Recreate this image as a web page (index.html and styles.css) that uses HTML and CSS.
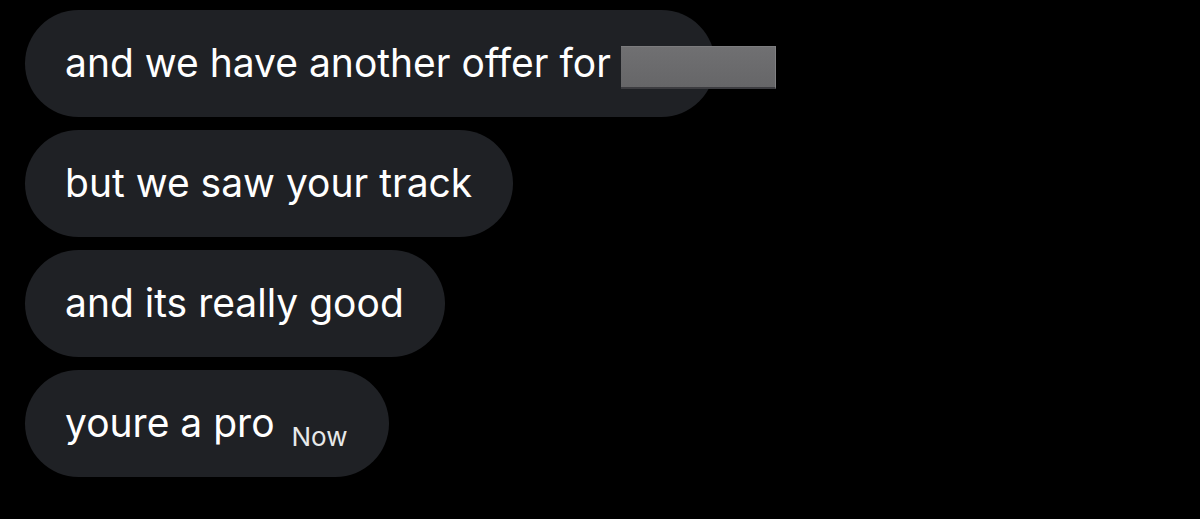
FILE: index.html
```html
<html>

<head>
  <link rel="stylesheet" href="styles.css">
</head>

<body>
  <div class="thread">
    <!-- first bubble has a redacted name at the end -->
    <div class="bubble first">
      <span class="msg">and we have another offer for</span>
      <span class="redact"></span>
    </div>
    <div class="bubble">
      <span class="msg">but we saw your track</span>
    </div>
    <div class="bubble">
      <span class="msg">and its really good</span>
    </div>
    <div class="bubble">
      <span class="msg">youre a pro</span>
      <span class="time">Now</span>
    </div>
  </div>
</body>

</html>
```

FILE: styles.css
```css
body {
  margin: 0;
  background-color: #000;
  font-family: Inter, "Open Sans", sans-serif;
  color: #fff;
}

.thread {
  display: flex;
  flex-direction: column;
  align-items: flex-start;
  gap: 13px;
  padding: 10px 0 0 25px;
}

.bubble {
  position: relative;
  display: flex;
  align-items: center;
  height: 107px;
  padding: 0 41px 0 40px;
  border-radius: 54px;
  background-color: #1f2125;
  box-sizing: border-box;
}

.bubble.first {
  padding-right: 104px; /* room for the hidden name */
}

.msg {
  font-size: 39px;
  margin-top: -2px;
}

.time {
  font-size: 26px;
  margin-left: 17px;
  margin-top: 26px;
  color: #e7e9ea;
}

.redact {
  position: absolute;
  left: 596px;
  top: 36px;
  width: 155px;
  height: 43px;
  background: linear-gradient(#707072, #666668);
  border-top: 1px solid #7c7c7e;
  border-bottom: 2px solid #3c3c40;
  border-right: 1px solid #808082;
  box-sizing: border-box;
}
```
